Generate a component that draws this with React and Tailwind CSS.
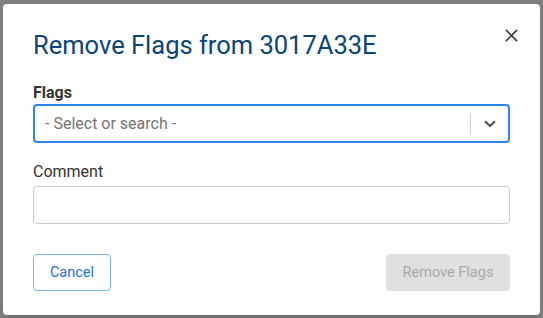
import React from 'react';

const App = () => {
  return (
    <div
      className="w-[543px] h-[318px] bg-[#7f7f7f] pt-[4px] pl-[3px] overflow-hidden"
      style={{ fontFamily: 'Roboto, "Liberation Sans", sans-serif' }}
    >
      <div className="relative w-[537px] h-[311px] bg-white rounded-[4px] px-[30px] pt-[26px] shadow-md">
        {/* close */}
        <button className="absolute top-[25px] right-[22px] w-[13px] h-[13px] text-[#333]">
          <svg viewBox="0 0 14 14" className="w-[13px] h-[13px]" fill="none" stroke="currentColor" strokeWidth="1.7">
            <path d="M1 1L13 13M13 1L1 13" />
          </svg>
        </button>

        <h2 className="text-[25.5px] leading-[30px] text-[#0b4577] font-normal">
          Remove Flags from 3017A33E
        </h2>

        <div className="mt-[23px]">
          <label className="block text-[16px] leading-[20px] font-bold text-[#333] mb-[1px]">Flags</label>
          <div className="flex items-center h-[39px] border-2 border-[#2d83f0] rounded-[4px] pl-[10px]">
            <span className="flex-1 text-[16px] text-[#757575]">- Select or search -</span>
            <span className="w-px h-[20px] bg-[#cccccc]" />
            <span className="w-[37px] flex justify-center">
              <svg viewBox="0 0 12 8" className="w-[12px] h-[8px]" fill="none" stroke="#555" strokeWidth="2.2">
                <path d="M1 1.2L6 6L11 1.2" />
              </svg>
            </span>
          </div>
        </div>

        <div className="mt-[19px]">
          <label className="block text-[16px] leading-[20px] text-[#333] mb-[4px]">Comment</label>
          <input className="block w-full h-[38px] border border-[#c5cbd3] rounded-[4px] px-[10px] text-[16px] outline-none" />
        </div>

        <div className="flex justify-between mt-[30px]">
          <button className="h-[37px] w-[78px] border border-[#7fb3ec] rounded-[4px] text-[14.5px] text-[#1c6fd8] bg-white">
            Cancel
          </button>
          <button className="h-[37px] w-[124px] rounded-[4px] text-[14.5px] text-[#a9a9a9] bg-[#e0e0e0]" disabled>
            Remove Flags
          </button>
        </div>
      </div>
    </div>
  );
};

export default App;
